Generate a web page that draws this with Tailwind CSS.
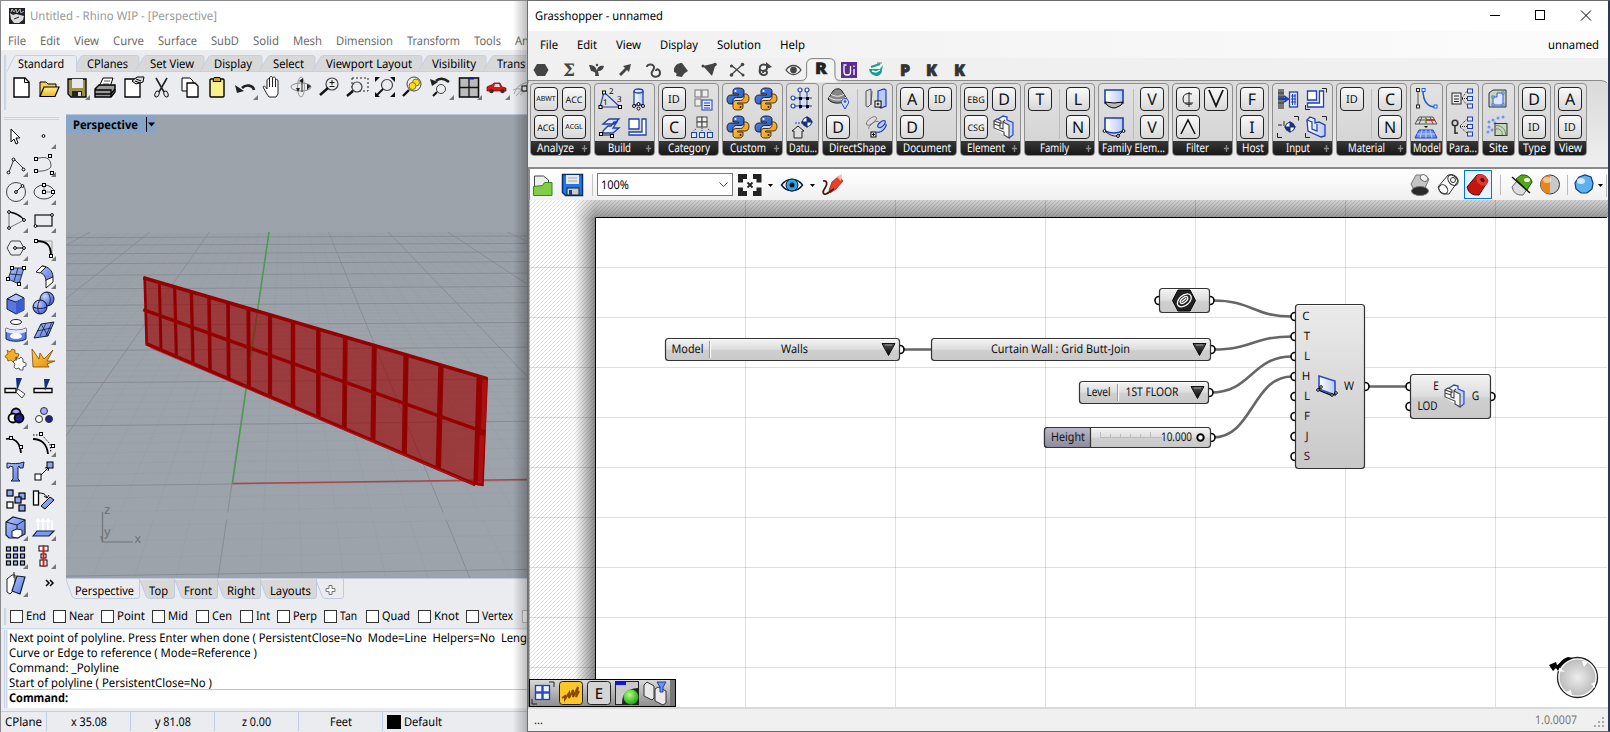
<!DOCTYPE html>
<html lang="en">
<head>
<meta charset="utf-8">
<title>Rhino WIP and Grasshopper</title>
<script src="https://cdn.jsdelivr.net/npm/@tailwindcss/browser@4"></script>
</head>
<body class="w-[1610px] h-[732px] overflow-hidden flex bg-[#ebecf0] font-['Noto_Sans','Open_Sans',sans-serif] text-[12px] leading-4 text-black select-none [text-rendering:geometricPrecision] [&_span]:whitespace-pre">

<svg class="absolute w-0 h-0">
  <defs>
    <linearGradient id="gBlue" x1="0" y1="0" x2="1" y2="1"><stop offset="0" stop-color="#b4c2ff"/><stop offset="1" stop-color="#5877e0"/></linearGradient>
    <linearGradient id="gPale" x1="0" y1="0" x2="1" y2="0"><stop offset="0" stop-color="#fff"/><stop offset="1" stop-color="#b9c9f8"/></linearGradient>
    <linearGradient id="gGold" x1="0" y1="0" x2="0" y2="1"><stop offset="0" stop-color="#fff0a0"/><stop offset="1" stop-color="#f0b51c"/></linearGradient>
    <linearGradient id="gOr" x1="0" y1="0" x2="1" y2="1"><stop offset="0" stop-color="#ffcf5e"/><stop offset="1" stop-color="#e88a00"/></linearGradient>
    <linearGradient id="gPy" x1="0" y1="0" x2="1" y2="1"><stop offset="0" stop-color="#4e8bf0"/><stop offset="1" stop-color="#2a52b0"/></linearGradient>
    <linearGradient id="gNode" x1="0" y1="0" x2="0" y2="1"><stop offset="0" stop-color="#f4f4f4"/><stop offset=".48" stop-color="#dedede"/><stop offset=".55" stop-color="#cfcfcf"/><stop offset="1" stop-color="#c9c9c9"/></linearGradient>
    <linearGradient id="gTall" x1="0" y1="0" x2="0" y2="1"><stop offset="0" stop-color="#ebebeb"/><stop offset="1" stop-color="#c8c8c8"/></linearGradient>
    <linearGradient id="gPur" x1="0" y1="0" x2="0" y2="1"><stop offset="0" stop-color="#b9b9c8"/><stop offset="1" stop-color="#8c8a9c"/></linearGradient>
    <linearGradient id="gTri" x1="0" y1="0" x2="0" y2="1"><stop offset="0" stop-color="#555"/><stop offset="1" stop-color="#000"/></linearGradient>
    <linearGradient id="gTop" x1="0" y1="0" x2="0" y2="1"><stop offset="0" stop-color="#d2d2d2"/><stop offset="1" stop-color="#9a9a9a"/></linearGradient>
    <linearGradient id="gLeft" x1="0" y1="0" x2="1" y2="0"><stop offset="0" stop-color="#999" stop-opacity="0"/><stop offset=".68" stop-color="#999" stop-opacity="0"/><stop offset="1" stop-color="#8c8c8c"/></linearGradient>
    <linearGradient id="gFade" x1="0" y1="0" x2="1" y2="0"><stop offset="0" stop-color="#fff"/><stop offset=".66" stop-color="#fff"/><stop offset="1" stop-color="#fff" stop-opacity="0"/></linearGradient>
    <radialGradient id="gSph" cx=".35" cy=".3" r=".8"><stop offset="0" stop-color="#c8d4ff"/><stop offset="1" stop-color="#3457d5"/></radialGradient>
    <radialGradient id="gBall" cx=".5" cy=".5" r=".5"><stop offset="0" stop-color="#ededed"/><stop offset="1" stop-color="#bdbdbd"/></radialGradient>
    <radialGradient id="gGreen" cx=".4" cy=".35" r=".7"><stop offset="0" stop-color="#b6ff7a"/><stop offset="1" stop-color="#0fa012"/></radialGradient>
    <pattern id="hatch" width="4" height="4" patternUnits="userSpaceOnUse"><path d="M-1 1L1-1M0 4L4 0M3 5L5 3" stroke="#000" stroke-opacity=".12" stroke-width="1"/></pattern>
    <symbol id="boxes" viewBox="0 0 24 24"><path d="M2 6l3-2 3 1 3-3 4 1 1 2 4 1 2 2v12l-4 3-7-4-9-5z" fill="#f8f8f8"/><path d="M14 4l7 3v13l-4 3V10l-4-3z" fill="#c4d1fa"/><path d="M6 4l5-3 4 1v3M15 5l6 2.500v12.500l-4 3" fill="none" stroke="#2b4cc0" stroke-width="1.300"/><path d="M2 6l6 2v5l3 1V7l6 3v13l-5-3v-3l-10-4zM2 6l3-2 4 2v3M11 7l2-2M2 9l6 2" fill="none" stroke="#444" stroke-width="1.100"/></symbol>
    <symbol id="wallic" viewBox="0 0 24 24"><path d="M4 3l16 5v14L4 16z" fill="url(#gPale)" stroke="#2b4cc0" stroke-width="1.600"/><path d="M3 17l14 5.500 4-2.500M3 17l3-3" stroke="#000" stroke-width="1.200" fill="none"/><g fill="#fff" stroke="#000"><circle cx="3" cy="17" r="1.300"/><circle cx="6" cy="14" r="1.300"/><circle cx="17" cy="22" r="1.300"/><circle cx="21" cy="20" r="1.300"/></g></symbol>
  </defs>
</svg>

<!-- Rhino window -->
<section class="relative w-[527px] h-[732px] shrink-0 overflow-hidden flex flex-col border-l border-t border-[#8a8a8e] bg-[#ebecf0]">
  <header class="h-[49px] bg-white shrink-0">
    <div class="h-[30px] flex items-center pl-2 gap-[5px] text-[#999]">
      <svg class="w-4 h-4" viewBox="0 0 16 16"><rect width="16" height="16" fill="#222"/><path d="M1 5l3 2 3-1 4 1 4 1-1 4-4 3H5L2 11z" fill="#ddd"/><path d="M2 4l1-3 2 3 2-3 1 4 3-4 1 4 3-2" stroke="#bbb" fill="none"/><path d="M5 11l5-2" stroke="#222"/></svg>
      <span data-w="187">Untitled - Rhino WIP - [Perspective]</span>
    </div>
    <nav id="rmenu" class="h-[19px] flex items-center pl-[7px] text-[#6b6b6b]"></nav>
  </header>
  <div class="h-[64px] shrink-0 flex pt-[5px]">
    <div class="w-[3px] h-[55px] ml-[3px] border-x border-[#c9d4e8]"></div>
    <div class="flex-1">
      <svg id="rtabs" class="block w-[520px] h-[18px]" viewBox="6 56 520 18"></svg>
      <div id="rtools" class="flex h-[28px] mt-[2px] ml-px"></div>
    </div>
  </div>
  <div class="flex h-[464px] shrink-0">
    <div class="w-[65px] shrink-0">
      <div class="ml-[3px] w-[55px] h-[3px] mt-[3px] border-y border-[#c9d4e8]"></div>
      <div id="ltools" class="grid grid-cols-[28px_28px] auto-rows-[28px] mt-[2px]"></div>
    </div>
    <svg id="view" class="block shrink-0 w-[462px] h-[464px]" viewBox="66 114 462 464"></svg>
  </div>
  <svg id="vtabs" class="block shrink-0 w-[527px] h-[22px]" viewBox="1 578 527 22"></svg>
  <div class="h-[29px] shrink-0 flex items-center border-b border-[#d3dbea] pt-[4px]">
    <div class="w-[3px] h-[17px] ml-[3px] border-x border-[#c9d4e8]"></div>
    <div id="osnap" class="flex ml-[4px]"></div>
  </div>
  <div class="h-[82px] shrink-0 flex pt-px">
    <div class="w-[3px] h-[78px] ml-[3px] border-x border-[#c9d4e8]"></div>
    <div class="h-[78px] flex-1 bg-white ml-px flex flex-col">
      <div class="h-[60px] shrink-0 border-b border-[#b9c7d8] pl-[1px] overflow-hidden flex flex-col items-start [&_svg]:h-[15px]!">
        <span data-w="518">Next point of polyline. Press Enter when done ( PersistentClose=No&nbsp; Mode=Line&nbsp; Helpers=No&nbsp; Leng</span>
        <span data-w="248">Curve or Edge to reference ( Mode=Reference )</span>
        <span data-w="110">Command: _Polyline</span>
        <span data-w="203">Start of polyline ( PersistentClose=No )</span>
      </div>
      <div class="pl-[1px] font-bold flex"><span data-w="59">Command:</span></div>
    </div>
  </div>
  <footer class="h-[20px] shrink-0 flex items-center border-t border-[#c0cde2] [&>div]:h-[19px] [&>div]:flex [&>div]:items-center [&>div]:border-r [&>div]:border-[#c0cde2]">
    <div class="w-[46px] justify-center"><span data-w="37">CPlane</span></div>
    <div class="w-[84px] justify-center"><span data-w="36">x 35.08</span></div>
    <div class="w-[84px] justify-center"><span data-w="36">y 81.08</span></div>
    <div class="w-[84px] justify-center"><span data-w="29">z 0.00</span></div>
    <div class="w-[84px] justify-center"><span data-w="22">Feet</span></div>
    <div class="pl-[4px] gap-[3px] border-none!"><i class="block w-[14px] h-[14px] bg-black"></i><span data-w="38">Default</span></div>
  </footer>
  <div class="absolute right-0 top-0 w-[14px] h-[732px] bg-linear-to-r from-black/0 to-black/25"></div>
</section>

<!-- Grasshopper window -->
<section class="w-[1083px] h-[732px] flex flex-col border border-[#6d6d70] border-r-2 border-r-[#28395c] bg-[#f0f0f0]">
  <header class="h-[30px] shrink-0 bg-white flex items-center pl-[7px]">
    <span data-w="128">Grasshopper - unnamed</span>
    <svg class="ml-auto w-[120px] h-[30px]" viewBox="1480 1 120 30" fill="none" stroke="#000" stroke-width="1"><path d="M1482 15.500h10M1573 10.500l10 10M1583 10.500l-10 10" transform="translate(8 0)"/><rect x="1535.500" y="10.500" width="9" height="9"/></svg>
    <i class="w-[8px] shrink-0"></i>
  </header>
  <nav id="gmenu" class="h-[27px] shrink-0 flex items-center pl-[12px] pr-[9px] bg-linear-to-r from-[#f0f0f0] to-[#fcfcfc]"></nav>
  <svg id="gtabs" class="block shrink-0 w-[1080px] h-[25px]" viewBox="528 58 1080 25"></svg>
  <div class="h-[84px] shrink-0 bg-linear-to-b from-[#dadada] to-[#efefef]">
    <div id="ribbon" class="flex gap-[3px] pl-[2px]"></div>
  </div>
  <div class="h-[33px] shrink-0 border-t-2 border-[#8a8a8a] border-l-2 bg-linear-to-b from-white to-[#f0f0f0] flex items-center">
    <svg class="w-[67px] h-[30px]" viewBox="530 169 67 30"><path d="M534.500 188v-13h9l5 4v7" fill="#eee" stroke="#444"/><path d="M533.500 194.500v-9l9-1 2-3h7.500v13z" fill="#83cc47" stroke="#2f8a1b"/><path d="M562.500 173.500h20v21h-17l-3-3z" fill="#1d78e8" stroke="#0b2c66" stroke-width="1.500"/><rect x="566" y="174" width="13" height="9" fill="#e8e8e8"/><path d="M568 177h9M568 180h9" stroke="#aaa"/><rect x="567" y="187" width="12" height="7" fill="#ccc" stroke="#123"/><rect x="569" y="189" width="3" height="5" fill="#14418f"/><path d="M592.500 173v22" stroke="#c4c4c4"/></svg>
    <div class="w-[136px] h-[23px] border border-[#7a7a7a] bg-white flex items-center pl-[3px] pr-[4px]"><span data-w="28">100%</span><svg class="ml-auto w-[9px] h-[6px]" viewBox="0 0 9 6" fill="none" stroke="#444"><path d="M.5.5l4 4 4-4"/></svg></div>
    <svg class="w-[115px] h-[30px]" viewBox="733 169 115 30"><g fill="none" stroke="#222" stroke-width="5"><path d="M747 175.500h-6.500v6M753 175.500h6v6M747 192.500h-6.500v-6M753 192.500h6v-6"/></g><path d="M747.500 181.500l5 5M752.500 181.500l-5 5" stroke="#222" stroke-width="1.800"/><path d="M768 183h5l-2.500 3zM810 183h5l-2.500 3z"/><path d="M781.500 184c5-7.500 16-7.500 21 0-5 7.500-16 7.500-21 0z" fill="#eef6fb" stroke="#123" stroke-width="1.500"/><circle cx="792" cy="184" r="6" fill="#36a3e0" stroke="#123"/><circle cx="792" cy="184" r="2.500" fill="#04182e"/><path d="M829 189l3-8 7-6 4 5-7 8-6 4z" fill="#e8412a" stroke="#8a1c10" stroke-width=".7"/><path d="M837 176l5-3-1 7z" fill="#f7b8a0"/><path d="M823 180c4-1 5 3 2 7s-2 7 1 6 5-4 8-5" fill="none" stroke="#4a1610" stroke-width="1.800"/></svg>
    <svg class="ml-auto w-[208px] h-[30px]" viewBox="1400 169 208 30" id="preview"></svg>
  </div>
  <div class="relative h-[507px] shrink-0">
    <svg id="canvas" class="block w-[1080px] h-[507px]" viewBox="528 200 1080 507"></svg>
    <div class="absolute left-px bottom-0 w-[147px] h-[28px] border border-black bg-linear-to-b from-[#d8d8d8] to-[#8f8f8f]"><svg id="mini" class="block w-[145px] h-[26px]" viewBox="530 680 145 26"></svg></div>
  </div>
  <footer class="flex-1 border-t-2 border-[#d9d9d9] flex items-center pl-[6px] pr-[3px] bg-[#f0f0f0]"><span class="text-[#223]" data-w="9">...</span><span class="ml-auto text-[#7b756e]" data-w="42">1.0.0007</span><svg class="ml-[16px] w-[12px] h-[12px] mt-[6px]" viewBox="0 0 12 12" fill="#a8a8a8"><path d="M9 0h2v2H9zM5 4h2v2H5zM9 4h2v2H9zM1 8h2v2H1zM5 8h2v2H5zM9 8h2v2H9z"/></svg></footer>
</section>

<script>
const $ = id => document.getElementById(id);
const px = n => `style="width:${n}px"`;
const words = (list, end) => list.map(([t, x, w], i) => `<div class="shrink-0" ${px((list[i + 1] ? list[i + 1][1] : end) - x)}><span data-w="${w}">${t}</span></div>`).join('');
const label = (t, x, y, w, more = '') => `<text x="${x}" y="${y}" font-size="12" textLength="${w}" lengthAdjust="spacingAndGlyphs" ${more}>${t}</text>`;

$('rmenu').innerHTML = words([['File',8,18],['Edit',40,20],['View',74,25],['Curve',113,31],['Surface',158,39],['SubD',211,28],['Solid',253,26],['Mesh',293,29],['Dimension',336,57],['Transform',407,53],['Tools',474,27],['An',515,14]], 560);
$('gmenu').innerHTML = words([['File',540,18],['Edit',577,20],['View',616,25],['Display',660,38],['Solution',717,44],['Help',780,25]], 820) + '<span class="ml-auto" data-w="51">unnamed</span>';

// Tool-group tabs above the Rhino toolbar
$('rtabs').innerHTML = [['CPlanes',76,139,87,41],['Set View',139,204,150,44],['Display',204,262,214,38],['Select',263,315,273,31],['Viewport Layout',316,422,326,86],['Visibility',422,486,432,44],['Transform',487,560,497,54]]
  .map(([t,a,b,x,w]) => `<path d="M${a-4} 72.500L${a+5} 57.500Q${a+6} 56.500 ${a+8} 56.500H${b-2}Q${b} 56.500 ${b} 59V72.500z" fill="#d8d8d9" stroke="#c5cfe3"/>${label(t,x,69,w)}`).join('')
  + `<path d="M7 72.500L14 58Q15 56.500 17 56.500H74Q76.500 56.500 76.500 59V72.500H530" fill="none" stroke="#c5cfe3"/><path d="M8 73L15 58Q16 57 17 57H74Q76 57 76 59V73z" fill="#ebecf0"/>${label('Standard',18,69,46)}`;

// Viewport tabs
$('vtabs').innerHTML = '<path d="M66 578.500H530" stroke="#c0cbe0"/>' + [['Layouts',260,316,270,41],['Right',217,260,227,28],['Front',175,217,184,28],['Top',140,174,149,19],['Perspective',66,139,75,59]]
  .map(([t,a,b,x,w]) => `<path d="M${a} ${t=='Perspective'?579:580}L${a+6} 596Q${a+7} 598.500 ${a+10} 598.500H${b-2}Q${b+.5} 598.500 ${b+.5} 596V579" fill="${t=='Perspective'?'#ebecf0':'#d8d8d9'}" stroke="#c0cbe0"/>${label(t,x,594.5,w)}`).join('')
  + '<path d="M316 580L322 596Q323 598.500 326 598.500H341Q343.500 598.500 343.500 596V579" fill="none" stroke="#c0cbe0"/><path d="M329 585.500h3v3h3v3h-3v3h-3v-3h-3v-3h3z" fill="#fff" stroke="#777"/>';

$('osnap').innerHTML = [['End',10,20],['Near',53,25],['Point',101,28],['Mid',152,20],['Cen',196,20],['Int',240,14],['Perp',277,24],['Tan',324,17],['Quad',366,28],['Knot',418,25],['Vertex',466,31],['',522,0]]
  .map(([t,x,w],i,l) => `<div class="shrink-0 flex items-center gap-[3px] overflow-hidden" ${px((l[i+1]?l[i+1][1]:540)-x)}><i class="block w-[13px] h-[13px] shrink-0 border bg-white ${t?'border-[#333]':'border-[#bbb]'}"></i>${t?`<span data-w="${w}">${t}</span>`:''}</div>`).join('');

// Rhino standard toolbar icons, 28px cells
const corner = '<path d="M27 22v5h-5z" fill="#777"/>';
const std = [
 '<path d="M7 5h11l4 4v15H7z" fill="#fff" stroke="#000" stroke-width="1.400"/><path d="M17.500 5v4.500H22" fill="none" stroke="#000"/>',
 '<path d="M5 23V9h6l2 2h8v4" fill="#f3cf4e" stroke="#000"/><path d="M5 23.500L9 14h15l-4 9.500z" fill="url(#gGold)" stroke="#000" stroke-width="1.200"/>',
 '<path d="M5 6h18v18H8l-3-3z" fill="#9a9145" stroke="#000" stroke-width="1.300"/><rect x="9" y="6" width="11" height="9" fill="#e8e8ee"/><rect x="9" y="18" width="10" height="6" fill="#222"/><rect x="15" y="19" width="3" height="4" fill="#ddd"/>'+corner,
 '<path d="M8 14l4-9h10l-3 9z" fill="#fff" stroke="#000"/><path d="M13 8h6M12 11h6" stroke="#555"/><path d="M4 16l4-4h16v7l-4 5H4z" fill="#999" stroke="#000" stroke-width="1.400"/><path d="M4 17h16v7M4 21h16l4-5" fill="none" stroke="#000" stroke-width="1.400"/>',
 '<path d="M6 6h12l3 4v14H6z" fill="#fff" stroke="#000" stroke-width="1.300"/><path d="M13 8l5-4h7l-1 5-7 2z" fill="#ddd" stroke="#000"/><path d="M17 6l5 2M16 8l5 2" stroke="#000"/>',
 '<path d="M9 5l8 14M20 5l-8 14" stroke="#222" stroke-width="1.600"/><ellipse cx="10" cy="21" rx="2" ry="3" fill="none" stroke="#222" transform="rotate(25 10 21)"/><ellipse cx="19" cy="21" rx="2" ry="3" fill="none" stroke="#222" transform="rotate(-25 19 21)"/>',
 '<path d="M7 5h8l3 3v10H7z" fill="#fff" stroke="#000"/><path d="M12 10h8l3 3v11H12z" fill="#fff" stroke="#000" stroke-width="1.300"/>',
 '<rect x="7" y="6" width="14" height="18" rx="1" fill="#fbf08e" stroke="#000" stroke-width="1.400"/><path d="M11 4.500h6l1 4h-8z" fill="#c79b34" stroke="#000"/>',
 '<path d="M23 17c-1-5-8-6-12-2" fill="none" stroke="#222" stroke-width="2.600"/><path d="M4 12l2 8 7-2z" fill="#222"/>'+corner,
 '<path d="M8 21L4 14c1-2 3 0 4 2V7c1-2 2.500-1 2.500 0V4.500c1-1.500 3-1 3 0V5c1-1.500 3-1 3 .500V7c1-1 2.500-.500 2.500 1v13l-2 3h-7z" fill="#fff" stroke="#222"/><path d="M10.500 7v7M13.500 5v9M16.500 7v7" stroke="#222"/>',
 '<ellipse cx="14" cy="14" rx="10" ry="4" fill="none" stroke="#888"/><ellipse cx="14" cy="14" rx="3.500" ry="10" fill="none" stroke="#999"/><path d="M12 8l4-3v5zM20 11l4 2-4 4zM9 15l2 4 2-4z" fill="#222"/><path d="M15 9v10" stroke="#222"/>',
 '<circle cx="17" cy="11" r="6" fill="#eee" stroke="#444" stroke-width="1.200"/><path d="M13 15l-8 7" stroke="#111" stroke-width="2.400"/><path d="M17 7v5M14.500 9.500h5M14.500 13.500h5" stroke="#111"/>',
 '<rect x="9" y="5" width="16" height="13" fill="none" stroke="#222" stroke-dasharray="2 2"/><circle cx="14" cy="14" r="5" fill="#ebecf0" stroke="#444" stroke-width="1.200"/><path d="M10 18l-6 5" stroke="#111" stroke-width="2.400"/>',
 '<path d="M4 9V4h5zM19 4h5v5zM4 19v5h5zM24 19v5h-5z" fill="#111"/><circle cx="16" cy="12" r="5.500" fill="none" stroke="#444" stroke-width="1.200"/><path d="M12 16l-7 7" stroke="#111" stroke-width="1.800"/>',
 '<circle cx="15" cy="11" r="7" fill="#eee" stroke="#444"/><path d="M10 17l-6 6" stroke="#111" stroke-width="2.400"/><circle cx="17" cy="9.500" r="3.500" fill="#ffe100" stroke="#864"/><circle cx="13.500" cy="13" r="3.500" fill="#ffe100" stroke="#864"/>',
 '<path d="M22 9c-5-4-10-4-13-1" fill="none" stroke="#222" stroke-width="2.600"/><path d="M3 6l2 7 6-4z" fill="#222"/><circle cx="14" cy="16" r="4.500" fill="#eee" stroke="#444"/><path d="M10 19l-4 4" stroke="#111" stroke-width="2"/>'+corner,
 '<rect x="4.500" y="5" width="19" height="19" fill="#bbb" stroke="#111" stroke-width="1.600"/><path d="M14 5v19M4.500 14.500h19" stroke="#111" stroke-width="1.300"/><path d="M14 5.500h5" stroke="#11c" stroke-width="2"/>'+corner,
 '<path d="M4 14c3-2 6-2 7-4h6l2 4 4 1v3H4z" fill="#e11616" stroke="#600" stroke-width=".700"/><path d="M12 11h4l1 3h-6z" fill="#ddd"/><circle cx="8.500" cy="18" r="2.300" fill="#333"/><circle cx="19.500" cy="18" r="2.300" fill="#333"/>'+corner,
 '<path d="M3 21c3-10 12-13 20-11M5 23l12-13M9 22l12-10M2 17c6-3 10 0 16 2" fill="none" stroke="#aaa"/><rect x="11" y="13" width="5" height="5" fill="#fff" stroke="#000"/>'
];
$('rtools').innerHTML = std.map(s => `<svg class="shrink-0 w-[28px] h-[28px]" viewBox="0 2 28 28">${s}</svg>`).join('');

// Rhino side toolbar icons
const dot = (x,y) => `<circle cx="${x}" cy="${y}" r="1.400" fill="#fff" stroke="#000"/>`, sq = (x,y) => `<rect x="${x-1.500}" y="${y-1.500}" width="3" height="3" fill="#fff" stroke="#000"/>`;
const bl = (x,y,f='#8ea4f2') => `<rect x="${x}" y="${y}" width="6" height="6" fill="${f}" stroke="#000" stroke-width="1.200"/>`;
const left = [
 '<path d="M10 7v13l3-3 2 5 2-1-2-5h4z" fill="#fff" stroke="#000"/>', dot(14.500,14)+corner,
 '<path d="M8 22L13 9l10 10" fill="none" stroke="#333"/>'+dot(7.500,22.500)+dot(12.500,9.500)+dot(22.500,19.500)+corner,
 '<path d="M7 9c8-3 15-2 15 7 0 3-7 6-15 5" fill="none" stroke="#555"/>'+sq(7,9)+sq(21,6)+sq(7,21)+sq(23,23)+corner,
 '<circle cx="15" cy="14" r="9.500" fill="none" stroke="#444"/><path d="M15 14l6-6" stroke="#000"/>'+dot(15,14)+dot(21.500,8)+corner,
 '<ellipse cx="15" cy="14" rx="10" ry="7" fill="none" stroke="#444"/><path d="M15 7v7h9" fill="none" stroke="#777"/>'+sq(15,7)+sq(15,14)+sq(24,14)+corner,
 '<path d="M8 6v16M8 22l15-8" stroke="#777"/><path d="M8 6c7 1 12 4 15 8" fill="none" stroke="#000" stroke-width="1.400"/>'+dot(8,6)+dot(23,14)+dot(8,22)+corner,
 '<rect x="6" y="9" width="17" height="11" fill="none" stroke="#222" stroke-width="1.300"/>'+dot(6.500,20)+dot(23,9)+corner,
 '<path d="M10 7h9l4 7-4 7h-9l-4-7z" fill="none" stroke="#444"/><path d="M14 14h9" stroke="#000"/>'+dot(14,14)+dot(23,14)+corner,
 '<path d="M7 7h16v14" fill="none" stroke="#999"/><path d="M7 7c11 0 15 4 15 15" fill="none" stroke="#000" stroke-width="1.800"/>'+sq(7,7)+sq(22,22)+corner,
 '<path d="M11 6h12l-5 16-11-5z" fill="url(#gBlue)" stroke="#234"/><path d="M9 12l12 1M17 6l-4 13" stroke="#234"/>'+sq(11,6)+sq(23,6)+sq(7,17)+sq(18,22)+corner,
 '<path d="M13 4c6 0 11 5 11 11l-7 4c0-5-4-9-9-9z" fill="url(#gBlue)" stroke="#222"/><path d="M7 10l6-6 4 1-6 6zM17 18l7-3v5l-7 6z" fill="#fff" stroke="#222"/>'+corner,
 '<path d="M6 9l9-5 8 4v12l-8 4-9-5z" fill="#5877e0" stroke="#123"/><path d="M6 9l9-5 8 4-8 4z" fill="#b4c2ff" stroke="#123"/><path d="M15 12l8-4v12l-8 4z" fill="#3d5bd0"/>'+corner,
 '<circle cx="18" cy="9" r="7" fill="url(#gSph)" stroke="#112"/><circle cx="11" cy="17" r="7" fill="url(#gSph)" stroke="#112"/><path d="M11 10c-3 4-3 10 0 14M4 17c4 2 10 2 14 0M18 2c4 4 4 9 2 13" fill="none" stroke="#224"/>'+corner,
 '<ellipse cx="15" cy="4" rx="5.500" ry="2.500" fill="#fff" stroke="#222"/><path d="M5 10c5 3 15 3 20 0v11c-5 3-15 3-20 0z" fill="#5f80ee" stroke="#124"/><path d="M5 10c5 3 15 3 20 0v4c-8 3-14 2-20 0z" fill="#dfe6ff"/><ellipse cx="15" cy="18" rx="6" ry="3" fill="#fff"/>'+corner,
 '<path d="M5 20l7-14 13-2-6 14z" fill="url(#gBlue)" stroke="#123"/><path d="M8 13l14-3M11 18L17 5M17 18l6-14M12 6l7 12" stroke="#123" stroke-width=".8"/>'+corner,
 '<path d="M6 4l3 2 2-3 3 1v3l4 1-1 3-3 1 1 3-3 1-2-2-3 1-1-3-2-1 1-2 2-1z" fill="#f5ac28" stroke="#7a5a10" stroke-width=".8"/><path d="M15 11l3 2 2-2 2 2v3l3 1v3l-3 1 0 3-3 0-1-2-3 1-2-2 1-3-2-2 2-2 2 0z" fill="#fff" stroke="#333" stroke-width=".8"/>',
 '<path d="M3 3l7 10 1-6 4 6 9-9-6 11h8l-8 3 2 3H4z" fill="url(#gOr)" stroke="#7a4a00" stroke-width=".8"/>',
 '<path d="M4 14.500h11v4H4z" fill="#fff" stroke="#000" stroke-width="1.300"/><path d="M15 4h6l-5 13z" fill="#16307e"/><path d="M17 15l7 5-3 4-6-6z" fill="#fff" stroke="#444"/>',
 '<path d="M5 14.500h18v4H5z" fill="#fff" stroke="#000" stroke-width="1.300"/><path d="M15 5h6l-5 12z" fill="#16307e"/>',
 '<g stroke="#000" stroke-width="1.800"><circle cx="15" cy="11" r="4.500" fill="#a9a6ff"/><circle cx="12" cy="16" r="4.500" fill="#fff"/><circle cx="18" cy="16" r="4.500" fill="#221d88"/></g>'+corner,
 '<g stroke="#333"><circle cx="15" cy="9" r="3.500" fill="#a9a6ff"/><circle cx="10" cy="17" r="3.500" fill="#fff"/><circle cx="20" cy="17" r="3.500" fill="#221d88"/></g>',
 '<path d="M5 9c8-2 14 3 15 14" fill="none" stroke="#000" stroke-width="1.800"/>'+sq(10,8)+sq(20,17),
 '<path d="M4 5h9l8 9 1 9" fill="none" stroke="#000" stroke-dasharray="1.500 1.500"/><path d="M4 9c8 0 14 5 15 15" fill="none" stroke="#000" stroke-width="1.800"/>'+sq(12,4)+sq(24,16)+corner,
 '<path d="M6 5c6 1 12 1 17-1l-1 6h-3l-1-2-1 1v12l2 2h-9l2-2V9l-3-1-1 2H6z" fill="url(#gBlue)" stroke="#124"/>',
 '<path d="M12 17l8-8M20 9l-4 1M20 9l-1 4" stroke="#000"/><rect x="18" y="4" width="6" height="6" fill="#8ea4f2" stroke="#000"/><rect x="6" y="16" width="6" height="6" fill="#fff" stroke="#000"/>'+corner,
 bl(6,4)+bl(18,7)+bl(14,11)+bl(6,16,'#fff')+bl(18,19),
 '<rect x="4.500" y="5" width="5" height="14" fill="#fff" stroke="#000" stroke-width="1.300"/><path d="M10 7c4 0 7 1 8 5M18 12l-3-2M18 12l2-3" fill="none" stroke="#000"/><path d="M12 20l9-9 4 3-9 9z" fill="url(#gBlue)" stroke="#000"/>',
 '<path d="M5 8l7-5 12 3v14l-7 4H8l-3-3z" fill="url(#gBlue)" stroke="#123" stroke-width="1.200"/><path d="M5 8l11 3 8-5M16 11v5" fill="none" stroke="#123"/><path d="M11 17l5-2 5 1v5l-4 3-6-1z" fill="#fff" stroke="#222"/>'+corner,
 '<path d="M9 17V6M14 17V6M19 17V6M23 17V6M7 8l2-3 2 3M12 8l2-3 2 3M17 8l2-3 2 3" fill="none" stroke="#fff" stroke-width="1.500"/><path d="M4 22l4-5h17l-5 5z" fill="#7d97f5" stroke="#124" stroke-width="1.200"/>'+corner,
 [5,12,19].map(y=>[5,12,19].map(x=>`<rect x="${x+.5}" y="${y}" width="4" height="4" fill="#9fb2f8" stroke="#000" stroke-width="1.200"/>`).join('')).join('')+corner,
 '<g fill="#fff" stroke="#000"><rect x="10" y="4" width="9" height="5"/><rect x="12" y="12" width="5" height="4"/><rect x="11" y="18" width="7" height="6"/></g><path d="M14.500 3v22" stroke="#e01818" stroke-width="2"/>'+corner,
 '<path d="M6 9l5-4h3v14l-5 5-3-2z" fill="#fff" stroke="#222"/><path d="M13 2v6" stroke="#222"/><path d="M16 6l8 1-5 17-8-3z" fill="url(#gBlue)" stroke="#123" stroke-width="1.200"/>'+corner,
 '<path d="M17 10l3 3-3 3M21 10l3 3-3 3" fill="none" stroke="#000" stroke-width="1.500"/>'
];
$('ltools').innerHTML = left.map(s => `<svg class="w-[28px] h-[28px]" viewBox="0 0 28 28">${s}</svg>`).join('');

// Perspective viewport: ground grid from its vanishing point, then axes and curtain wall
const vx = 284.800, vy = 124.700, top0 = 232, bot = 578;
let g = '<rect x="66" y="114" width="462" height="464" fill="#9ca3ab"/><g fill="none">';
for (let n = -90; n <= 90; n++) {
  const x0 = 269 + 59.600 * n / 6, k = (bot - vy) / (top0 - vy), major = n % 6 === 0;
  g += `<path d="M${x0} ${top0}L${vx + (x0 - vx) * k} ${bot}" stroke="${major ? '#868891' : '#929aa2'}" stroke-width="${major ? 1 : .7}" stroke-opacity="${major ? .9 : .6}"/>`;
}
for (let n = -8; n <= 71; n++) {
  const d = 1 / (.002783 + .000556 * n / 6), y = vy + d, major = n % 6 === 0, s = -.0118 * d / 359;
  if (y < 233) continue;
  g += `<path d="M66 ${y - s * 166}L528 ${y + s * 296}" stroke="${major ? '#868891' : '#929aa2'}" stroke-width="${major ? 1 : .7}" stroke-opacity="${major ? .9 : .55}"/>`;
}
g += '</g><rect x="66" y="512.500" width="462" height="7" fill="#9ca3ab"/><path d="M232.500 483.500L528 479.500" stroke="#a8484a" stroke-width="1.500"/><path d="M269 232L232.500 483" stroke="#4b9b4b" stroke-width="1.500"/>';
g += '<g transform="translate(130 220) scale(.33333)"><path d="M42 172L1072 474L1060 798L1032 794L50 372z" fill="#990000" fill-opacity=".64"/><g stroke="#960000" fill="none"><path d="M40 173L1072 476" stroke-width="11"/><path d="M40 269L1065 637" stroke-width="10"/><path d="M48 371L1036 794" stroke-width="11"/><path d="M44 170L50 372" stroke-width="8"/>';
[[88,186,93,388],[134,198,139,407],[184,213,189,430],[237,228,240,452],[294,245,296,476],[355,263,357,500],[420,283,420,528],[489,303,489,558],[565,325,565,590],[646,349,643,624],[733,375,729,660],[828,403,823,700],[933,434,925,744]].forEach(([a,b,c,d],i) => g += `<path d="M${a} ${b}L${c} ${d}" stroke-width="${9 + i * .6}"/><path d="M${a+1} ${b}L${c+1} ${d}" stroke="#6d0000" stroke-width="1.500"/>`);
g += '</g><path d="M1040 470L1074 474L1061 799L1030 794z" fill="#960000"/><path d="M1057 478l14 2-4 150-14-2zM1049 645l14 1-6 145-14-2z" fill="#a81212"/><path d="M60 383L1030 793" stroke="#b52a2a" stroke-width="2"/></g>';
g += '<path d="M256.500 317L250 360" stroke="#6b4a20" stroke-opacity=".55" stroke-width="1.300"/>';
g += '<path d="M102.500 512V542H133M101 536l1.500 6" fill="none" stroke="#70757b" stroke-width="1.200"/><g font-size="13" fill="#6c7177" font-family="Liberation Sans"><text x="104" y="514">z</text><text x="104" y="536">y</text><text x="134.500" y="543">x</text></g>';
g += '<path d="M65 114.500H528" stroke="#b9c5da"/><rect x="66" y="115" width="90" height="18" fill="#87a5c9"/><path d="M146.500 117v15" stroke="#000"/><path d="M148 122.500h7l-3.500 4z"/>' + label('Perspective', 73, 128.500, 65, 'font-weight="700"');
$('view').innerHTML = g;

// Grasshopper category tabs
const dk = 'fill="#444"', ds = 'stroke="#444" fill="none"';
$('gtabs').innerHTML = `<path d="M528 83V80.500H801Q806.500 80.500 806.500 75V64Q807 58.500 813 58.500H829Q835 58.500 835 64V75Q835 80.500 840.500 80.500H1601Q1606 81 1607 83" fill="#dadada" stroke="#8a8a8a"/><path d="M803 82.500Q807.500 80 807.500 75V64Q808 59.500 813 59.500H829Q834 59.500 834 64V75Q834 80 838 82.500z" fill="#f3f3f3"/>
<path d="M537 64h8l3.500 6-3.500 6h-8l-3.500-6z" ${dk}/><text x="563" y="76" font-size="17" font-weight="800" font-family="DejaVu Serif" ${dk} textLength="12" lengthAdjust="spacingAndGlyphs">Σ</text>
<path d="M595 76c1-4 0-4-4-5l-2-6c5 0 7 2 8 6 0-3 2-6 7-5-1 4-3 5-6 5l1 5z" ${dk}/><circle cx="597" cy="65" r="1.200" ${dk}/><path d="M619 74l6-6-2-2 8-2-2 8-2-2-6 6z" ${dk}/>
<path d="M647 67c0-4 8-3 7 1s-4 4-2 7 8 2 8-2-4-5-4-2" stroke-width="2" ${ds}/><path d="M674 69c1-4 4-6 8-6l6 8c-2 1-5 3-6 6l-6-1c1-2 1-3-2-4z" ${dk}/><path d="M703 66l13-3-4 13z" ${dk}/><circle cx="703" cy="66" r="1.500" ${dk}/><circle cx="715" cy="64.500" r="1.800" ${dk}/>
<path d="M731 65l12 10M742 65l-11 10" stroke-width="1.300" ${ds}/><g ${dk}><circle cx="731.500" cy="66" r="1.600"/><circle cx="742.500" cy="64.500" r="1.800"/><circle cx="731.500" cy="75" r="1.800"/><circle cx="743" cy="75" r="1.500"/></g>
<path d="M768 66c-5-3-9-1-8 3 1 3 7 2 7-1M760 69c-2 6 6 8 7 4 0-3-4-3-4 0" stroke-width="1.900" ${ds}/><path d="M766 62l6 5-6 2z" ${dk}/>
<path d="M786 70c4-6 11-6 15 0-4 6-11 6-15 0z" fill="#eee" stroke="#444" stroke-width="1.300"/><circle cx="793.500" cy="70" r="3.300" ${dk}/>
<text x="815" y="74" font-size="16" font-weight="900" fill="#222" stroke="#222" stroke-width=".5" textLength="12" lengthAdjust="spacingAndGlyphs">R</text>
<rect x="841" y="62" width="16" height="16" fill="#5c2d91"/><path d="M844 66v6q0 3 3 3h1q2.500 0 2.500-3v-6M854 69v6M854 65.500v1.500M843.500 65h3" stroke="#fff" stroke-width="1.300" fill="none"/>
<path d="M869 69h11l3-4-1 5c0 4-3 6-6 6-4-1-6-3-7-7z" fill="#1b9c8c"/><path d="M871 67l9-3" stroke="#1b9c8c" stroke-width="2"/><path d="M872 71l4 1 4-2" stroke="#fff" fill="none" stroke-width="1.300"/><path d="M877 63l5 0" stroke="#777"/>
<g font-size="16" font-weight="900" fill="#333" stroke="#333" stroke-width=".7"><text x="900" y="76">P</text><text x="926" y="76">K</text><text x="954" y="76">K</text></g>`;

// Ribbon: plain items are lettered keys, starred ones are drawn icons
const key = (t) => `<div class="w-[24px] h-[24px] rounded-[4px] border border-[#222] bg-linear-to-b from-[#fafafa] to-[#d8d8d8] flex items-center justify-center leading-none ${t.length == 1 ? 'text-[16px]' : t.length == 2 ? 'text-[11px]' : t.length == 3 ? 'text-[9px]' : 'text-[7px]'} text-[#111]">${t}</div>`;
const ic = s => `<svg class="w-[24px] h-[24px]" viewBox="0 0 24 24">${s}</svg>`;
const py = ic('<path d="M12 1C8 1 7 2.500 7 4v3h5.500v1H5C2.500 8 1 9.500 1 12.500S2.500 17 4.500 17H7v-3c0-2 1.500-3.500 3.500-3.500H15c1.500 0 3-1 3-3V4c0-2-2-3-6-3z" fill="url(#gPy)" stroke="#112" stroke-width=".9"/><path d="M12 23c4 0 5-1.500 5-3v-3h-5.500v-1H19c2.500 0 4-1.500 4-4.500S21.500 7 19.500 7H18v3c0 2-1.500 3.500-3.500 3.500H10c-1.500 0-3 1-3 3V20c0 2 1 3 5 3z" fill="url(#gOr)" stroke="#321" stroke-width=".9"/><circle cx="9.500" cy="4" r="1" fill="#fff"/><circle cx="14.500" cy="20" r="1" fill="#321"/>');
const B = 'stroke="#1d3fb0" fill="none" stroke-width="1.200"', K = 'stroke="#222" fill="none"', F = 'stroke="#1d3fb0" fill="url(#gPale)" stroke-width="1.300"', C = '<path d="M18 1.500h4.500v4M1.500 18v4.500H6" fill="none" stroke="#222"/>';
const I = {
 py,
 tri: ic(`<path d="M2 20L6 5 22 20z" ${B}/>${sq(2.500,20)}${sq(6,5.500)}${sq(22,20)}<g font-size="8" fill="#000"><text x="11" y="7">2</text><text x="5" y="18">1</text><text x="19" y="15">3</text></g>`),
 col: ic(`<path d="M8 4v14h9V4" ${F}/><ellipse cx="12.500" cy="4" rx="4.500" ry="2" ${F}/><g fill="#fff" stroke="#000"><circle cx="8" cy="19" r="1.500"/><circle cx="17" cy="19" r="1.500"/><circle cx="12.500" cy="17" r="1.500"/><circle cx="12.500" cy="21.500" r="1.500"/></g>`),
 beam: ic(`<path d="M5 9l6-5h10l-5 5zM5 16l5-5h3l3-4h3l-4 6h6l-6 5H5z" ${F}/><path d="M3 20h12" ${K}/>${sq(3,19)}${sq(14,21)}`),
 floor: ic(`<path d="M3 4h10v10H3zM16 4h4v16H3v-3h13z" fill="#fff" stroke="#1d3fb0" stroke-width="1.300"/>`),
 cat1: ic('<g fill="#eee" stroke="#777"><rect x="5" y="3" width="6" height="7"/><rect x="12" y="3" width="6" height="7"/><rect x="5" y="12" width="6" height="7"/></g><rect x="12" y="13" width="10" height="10" fill="#e4ebff" stroke="#1d3fb0"/><path d="M14 16h6M14 18.500h6M14 21h6" stroke="#1d3fb0"/>'),
 cat2: ic('<g fill="#eee" stroke="#444"><rect x="7" y="2" width="5" height="5"/><rect x="12" y="2" width="5" height="5"/><rect x="7" y="7" width="5" height="5"/><rect x="12" y="7" width="5" height="5"/></g><path d="M6 14l-3 2M12 13v3M18 14l3 2" stroke="#333" stroke-dasharray="1 1"/><g fill="#dfe7ff" stroke="#1d3fb0"><rect x="1.500" y="17.500" width="5" height="5"/><rect x="9.500" y="17.500" width="5" height="5"/><rect x="17.500" y="17.500" width="5" height="5"/></g>'),
 grid: ic('<path d="M5 11h17M5 19h17M10 5v17M17 5v17" stroke="#1d3fb0"/><g fill="#fff" stroke="#1d3fb0" stroke-width="1.200"><circle cx="3" cy="11" r="2"/><circle cx="3" cy="19" r="2"/><circle cx="10" cy="3" r="2"/><circle cx="17" cy="3" r="2"/></g><g fill="#000"><path d="M9 10h3v3H9zM16 10h3v3h-3zM9 18h3v3H9zM16 18h3v3h-3z"/></g>'),
 home: ic('<path d="M2 16l6-5 6 5h-2v7H4v-7z" fill="#ddd" stroke="#222"/><path d="M5 8h8" stroke="#1d3fb0" stroke-dasharray="2 1"/><circle cx="17" cy="7" r="4.500" fill="#fff" stroke="#16307e" stroke-width="1.200"/><path d="M17 7V2.500A4.500 4.500 0 0 1 21.500 7zM17 7v4.500A4.500 4.500 0 0 1 12.500 7z" fill="#16307e"/><path d="M17 1v12M11 7h12" stroke="#16307e"/>'),
 dome: ic('<path d="M7 4c3-3 7-3 9 0l5 8c-3 5-15 6-19 0z" fill="#888" stroke="#222"/><path d="M5 7c3 3 10 3 13 0M3 10c4 4 14 4 17 0" fill="none" stroke="#eee"/><path d="M19 22l-3.500-6a3.600 3.600 0 1 1 7 0z" fill="#cddcff" stroke="#2b4cc0"/><circle cx="19" cy="14.500" r="1.200" fill="#2b4cc0"/>'),
 dsA: ic('<path d="M2 4l5-2v15l-3 3-2-1z" fill="#ddd" stroke="#555"/><path d="M8 4l-1 14" stroke="#555"/><path d="M14 4l6-2 2 1v16l-5 2-3-2z" fill="#b9c9f8" stroke="#1d3fb0" stroke-width="1.200"/><rect x="11" y="14" width="6" height="6" fill="#fff" stroke="#000"/><path d="M14 15.500v3M12.500 17h3" stroke="#000"/>'),
 dsB: ic('<path d="M3 10c-3-3 6-10 9-8s-7 10-9 8zM5 14c-2-2 7-10 10-7" fill="#ddd" stroke="#777"/><path d="M14 12c-2-2 5-8 7-6s-5 9-7 6zM13 17c4 2 10-5 9-8" fill="#b9c9f8" stroke="#1d3fb0" stroke-width="1.200"/><rect x="7" y="17" width="5" height="5" fill="#fff" stroke="#000"/><path d="M9.500 18v3M8 19.500h3" stroke="#000"/>'),
 boxes: '<svg class="w-[24px] h-[24px]"><use href="#boxes"/></svg>',
 faA: ic('<path d="M3 3h18v13q-9 6-18 0z" fill="url(#gPale)" stroke="#1d3fb0" stroke-width="1.600"/><path d="M3 15q3 6 10 6 7-2 8-6-9 2-18 0" fill="#bbb" stroke="#000"/>'),
 faB: ic(`<path d="M3 3h18v13q-9 4-18 0z" fill="url(#gPale)" stroke="#1d3fb0" stroke-width="1.600"/><path d="M3 16q6 6 13 5l5-5" ${K}/>${dot(2.500,16)}${dot(21.500,16)}${dot(16,21)}`),
 nin: key('<svg class="w-[22px] h-[22px]" viewBox="0 0 22 22" fill="none" stroke="#222"><path d="M15 6q-9-2-9 5t9 5M12 4v15M8 15h8"/></svg>'),
 or: key('<svg class="w-[22px] h-[22px]" viewBox="0 0 22 22" fill="none" stroke="#111" stroke-width="1.800"><path d="M4 2l7 16L18 2"/></svg>'),
 and: key('<svg class="w-[22px] h-[22px]" viewBox="0 0 22 22" fill="none" stroke="#111" stroke-width="1.500"><path d="M4 18l7-14 7 14"/></svg>'),
 in1: ic('<path d="M2 2h6v20H2z" fill="#777"/><path d="M2 6h6M2 10h6M2 16h6" stroke="#333"/><path d="M2 12h8M8 9l4 3-4 3" stroke="#1d3fb0" stroke-width="2" fill="none"/><rect x="13.500" y="5" width="8" height="15" fill="#e4ebff" stroke="#1d3fb0" stroke-width="1.300"/><path d="M15 9h5M15 12h5M15 15h5M16.500 7v11M19 7v11" stroke="#1d3fb0"/>'),
 in2: ic(`<path d="M3.500 4h9v9h-9zM15.500 4h4v16h-16v-4h12z" fill="#fff" stroke="#1d3fb0" stroke-width="1.300"/>${C}`),
 in3: ic(`<path d="M2 10h4M8 6v5" stroke="#222"/><circle cx="14" cy="12" r="4.500" fill="#fff" stroke="#16307e" stroke-width="1.200"/><path d="M14 12V7.500A4.500 4.500 0 0 1 18.500 12zM14 12v4.500A4.500 4.500 0 0 1 9.500 12z" fill="#16307e"/><path d="M14 6v12M8 12h12" stroke="#16307e"/>${C}`),
 in4: ic(`<path d="M3 5l3-3 5 2v4l4-1 6 3v11l-4 1-13-6z" ${F}/><path d="M3 5l5 2v7l5 2V9" ${B}/>${C}`),
 mo1: ic('<path d="M4 3v17" stroke="#555"/><path d="M9 3c0 10 3 17 13 17" fill="none" stroke="#1d5fd0" stroke-width="1.500"/><g fill="#fff" stroke="#222"><rect x="2.500" y="1.500" width="3" height="3"/><rect x="2.500" y="18" width="3" height="3"/></g><g fill="#fff" stroke="#1d5fd0"><rect x="8" y="1.500" width="3" height="3"/><rect x="20" y="18" width="3" height="3"/></g>'),
 mo2: ic('<path d="M5 2h14l4 7H1zM3 5h18M8 2L5 9M12 2v7M16 2l3 7" fill="none" stroke="#555"/><path d="M12 2v7" stroke="#2c2" stroke-width="1.500"/><path d="M12 5h9" stroke="#e01818" stroke-width="1.500"/><path d="M10 11h4l-2 2z"/><path d="M5 15h14l4 8H1z" fill="#6f90f4" stroke="#1d3fb0"/><path d="M3 19h18M8 15l-2 8M12 15v8M16 15l2 8" stroke="#cfdcff" stroke-width=".8"/>'),
 pa1: ic('<rect x="2" y="6" width="9" height="11" fill="#eee" stroke="#222"/><path d="M4 9h5M4 12h5M4 14.500h5" stroke="#222"/><path d="M12 11l5-7M12 11.500h5M12 12l5 6" stroke="#222" stroke-dasharray="1 1"/><g fill="#dfe7ff" stroke="#1d3fb0"><rect x="17.500" y="2" width="5" height="4"/><rect x="17.500" y="9.500" width="5" height="4"/><rect x="17.500" y="17" width="5" height="4"/></g>'),
 pa2: ic('<circle cx="5" cy="8" r="2.800" fill="none" stroke="#333" stroke-width="1.600"/><path d="M5 11v8M5 18h3" stroke="#333" stroke-width="1.600"/><path d="M10 11l7-7M10 11.500h7M10 12l7 6" stroke="#222" stroke-dasharray="1 1"/><g fill="#dfe7ff" stroke="#1d3fb0"><rect x="17.500" y="2" width="5" height="4"/><rect x="17.500" y="9.500" width="5" height="4"/><rect x="17.500" y="17" width="5" height="4"/></g>'),
 si1: ic('<path d="M3 6l4-3h13v17H3z" fill="#c4d6bc" stroke="#333"/><path d="M7 18v-8h4V6h6v12z" fill="#dfe7ff" stroke="#2b5fe0"/><g fill="#fff" stroke="#2b5fe0" stroke-width=".8"><rect x="6" y="9" width="2" height="2"/><rect x="6" y="17" width="2" height="2"/><rect x="16" y="5" width="2" height="2"/><rect x="16" y="17" width="2" height="2"/></g>'),
 si2: ic('<g fill="#6f90f4"><circle cx="3" cy="7" r="1.500"/><circle cx="7" cy="5" r="1.500"/><circle cx="12" cy="3" r="1.500"/><circle cx="17" cy="2" r="1.500"/><circle cx="3" cy="12" r="1.500"/><circle cx="6" cy="15" r="1.500"/><circle cx="2" cy="17" r="1.500"/><circle cx="9" cy="8" r="1.500"/></g><rect x="9" y="8.500" width="12" height="12" fill="#c4d6bc" stroke="#333"/><path d="M10 14c4-1 7 3 6 6M10 10.500c7 0 10 5 9.500 10" fill="none" stroke="#6f8f66"/>')
};
const groups = [['Analyze',61,1,37,'ABWT ACC ACG ACGL'],['Build',61,1,23,'*tri *col *beam *floor'],['Category',61,0,42,'ID *cat1 C *cat2'],['Custom',61,1,36,'*py *py *py *py'],['Datu...',33,0,28,'*grid *home'],['DirectShape',71,0,57,'*dome *dsA D *dsB'],['Document',61,0,48,'A ID D'],['Element',61,1,38,'EBG D CSG *boxes'],['Family',71,1,29,'T L _ N'],['Family Elem...',71,0,63,'*faA V *faB V'],['Filter',61,1,23,'*nin *or *and'],['Host',33,0,22,'F I'],['Input',61,1,24,'*in1 *in2 *in3 *in4'],['Material',71,1,37,'ID C _ N'],['Model',33,0,28,'*mo1 *mo2'],['Para...',33,0,28,'*pa1 *pa2'],['Site',33,0,19,'*si1 *si2'],['Type',33,0,23,'D ID'],['View',33,0,23,'A ID']];
$('ribbon').innerHTML = groups.map(([n,w,plus,tw,items]) => {
  const cells = items.split(' ').map(k => k == '_' ? '<i></i>' : k[0] == '*' ? I[k.slice(1)] : key(k)).join('');
  const cols = w == 33 ? 'grid-cols-[24px]' : w == 61 ? 'grid-cols-[24px_24px] gap-x-[4px]' : 'grid-cols-[24px_24px] gap-x-[14px]';
  return `<div class="h-[73px] shrink-0 rounded-[4px] border border-[#8f8f8f] bg-linear-to-b from-[#e2e2e2] to-[#d2d2d2] flex flex-col overflow-hidden relative" ${px(w)}>
   <div class="grid ${cols} auto-rows-[24px] gap-y-[4px] pl-[3px] pt-[3px] h-[58px]">${cells}</div>
   ${w == 71 ? '<i class="absolute left-[34px] top-[5px] w-px h-[50px] bg-[#bcbcbc]"></i>' : ''}
   <div class="h-[14px] -mx-px bg-linear-to-b from-[#383838] to-[#181818] text-white flex items-center"><div class="flex-1 flex justify-center"><span data-w="${tw}">${n}</span></div>${plus ? '<svg class="w-[7px] h-[7px] mr-[3px]" viewBox="0 0 8 8"><path d="M4 0v8M1 4h6" stroke="#8a8a8a" stroke-width="1.500"/></svg>' : ''}</div></div>`;
}).join('');

// Preview mode buttons
$('preview').innerHTML = `<path d="M1411 183l5-9h8l5 4-4 9h-12z" fill="#c4c4c4" stroke="#777"/><ellipse cx="1424" cy="177" rx="4" ry="3" fill="#f4f4f4" stroke="#777" transform="rotate(35 1424 177)"/><ellipse cx="1420" cy="190" rx="8.500" ry="4.500" fill="#2a2a2a" stroke="#777"/>
<g fill="none" stroke="#333"><path d="M1438 186l10-12q7-1 10 6l-9 13q-9 1-11-7z" fill="#fafafa"/><ellipse cx="1453" cy="179" rx="6" ry="4.500" transform="rotate(50 1453 179)"/><ellipse cx="1443.500" cy="188" rx="5" ry="4" transform="rotate(50 1443 188)"/><circle cx="1453" cy="179" r="2.500"/></g>
<rect x="1464.500" y="169.500" width="27" height="28" fill="#e5f1fb" stroke="#0078d7"/><path d="M1467 186l10-12q8-2 11 6l-9 14q-10 1-12-8z" fill="#c2160f" stroke="#4d0500"/><ellipse cx="1482" cy="179" rx="6.500" ry="5" fill="#e0382c" transform="rotate(45 1482 179)"/><ellipse cx="1482.500" cy="179" rx="2.500" ry="1.800" fill="#5a0500" transform="rotate(45 1482.500 179)"/>
<path d="M1500.500 174v20M1567.500 174v20M1606.500 174v22" stroke="#bbb"/>
<path d="M1512 186l9-11q8-1 11 6l-9 13q-9 1-11-8z" fill="#ddd" stroke="#666"/><path d="M1516 178l5-4q9-1 11 7l-5 8z" fill="#55a51c" stroke="#275c07"/><ellipse cx="1527" cy="179" rx="3" ry="2" fill="#eef5e6"/><path d="M1512 176l18 16" stroke="#111" stroke-width="1.500"/>
<circle cx="1550" cy="183.500" r="9.500" fill="#c9c9c9" stroke="#333"/><path d="M1550 174a9.500 9.500 0 0 0 0 19z" fill="#e8861c"/><ellipse cx="1547" cy="179" rx="4" ry="3" fill="#fff" fill-opacity=".5"/>
<path d="M1579 176l6-2 6 2 2 6-1 6-5 4h-6l-5-4-1-6z" fill="#5db1ee" stroke="#16387a" stroke-width="1.200"/><ellipse cx="1581" cy="180" rx="4" ry="3" fill="#cfeaff"/><path d="M1598 183h5l-2.500 3z"/>`;

// Node canvas
const nt = (t, x, y, w, a = 'middle', f = '#111') => `<text x="${x}" y="${y}" font-size="12" text-anchor="${a}" fill="${f}" textLength="${w}" lengthAdjust="spacingAndGlyphs">${t}</text>`;
const box = (x, y, w, h, f = 'gNode') => `<rect x="${x + .5}" y="${y + .5}" width="${w - 1}" height="${h - 1}" rx="3" fill="url(#${f})" stroke="#333" stroke-width="1.200"/><path d="M${x + 3} ${y + 1.500}h${w - 6}" stroke="#fff" stroke-opacity=".7"/>`;
const tri = (x, y) => `<path d="M${x} ${y}h13l-6.500 12z" fill="url(#gTri)" stroke="#111"/><path d="M${x+3} ${y+1.500}h7" stroke="#999"/>`;
const gin = (x, y) => `<path d="M${x} ${y - 4}a4 4 0 0 0 0 8" fill="#fff" stroke="#000" stroke-width="1.600"/>`;
const gout = (x, y) => `<path d="M${x} ${y - 4}a4 4 0 0 1 0 8" fill="#fff" stroke="#000" stroke-width="1.600"/>`;
const wire = (a, b, c, d) => `<path d="M${a} ${b}C${(a + c) / 2} ${b} ${(a + c) / 2} ${d} ${c} ${d}" fill="none" stroke="#666" stroke-width="2.600"/>`;
let c = '<rect x="528" y="200" width="1080" height="508" fill="#fff"/><rect x="529" y="200" width="1079" height="17" fill="url(#gTop)"/><rect x="529" y="200" width="66" height="18" fill="url(#gFade)"/><rect x="529" y="217" width="66" height="491" fill="url(#gLeft)"/><rect x="529" y="200" width="66" height="508" fill="url(#hatch)"/><rect x="595" y="200" width="1013" height="17" fill="url(#hatch)"/><g stroke="#000" stroke-opacity=".13">';
for (let x = 745; x < 1600; x += 150) c += `<path d="M${x + .5} 200V707"/>`;
for (let y = 267; y < 700; y += 50) c += `<path d="M529 ${y + .5}H1607"/>`;
c += '</g><path d="M595.500 707V217.500H1607" fill="none" stroke="#000"/><path d="M528.500 200V707" stroke="#777" stroke-width="2"/>';
c += wire(904,349.500,931,349.510)+wire(1213,300.500,1292,316.500)+wire(1213,349.500,1292,336.500)+wire(1211,392.500,1292,356.500)+wire(1213,437.500,1292,376.500)+wire(1369,386.500,1407,386.510);
c += gout(900,349.500)+gin(1159,300.500)+gout(1210,300.500)+gout(1211,349.500)+gout(1209,392.500)+gout(1211,437.500)+gout(1365,386.500)+gin(1410,386.500)+gin(1410,406.500)+gout(1491,396.500);
for (let i = 0; i < 8; i++) c += gin(1295, 316.500 + 20 * i);
c += box(665,338,235,23)+nt('Model',671.500,352.500,32,'start')+'<path d="M709.500 341v17" stroke="#999"/><path d="M710.500 341v17" stroke="#fff"/>'+nt('Walls',794.500,352.500,27)+tri(882,343.500);
c += box(931,338,280,23)+nt('Curtain Wall : Grid Butt-Join',1060.500,352.500,139)+tri(1193,343.500);
c += box(1079,381,130,23)+nt('Level',1086.500,395.500,24,'start')+'<path d="M1117.500 384v17" stroke="#999"/><path d="M1118.500 384v17" stroke="#fff"/>'+nt('1ST FLOOR',1152,395.500,53)+tri(1191,386.500);
c += box(1044,427,167,21)+'<path d="M1090.500 427.500h-43a3 3 0 0 0-3 3v14a3 3 0 0 0 3 3h43z" fill="url(#gPur)" stroke="#333" stroke-width="1.200"/>'+nt('Height',1068,440.500,34)+'<path d="M1100 437.500h62M1100.500 432v6M1110.500 434v4M1120.500 434v4M1130.500 434v4M1140.500 434v4M1150.500 432v6" stroke="#bbb"/>'+nt('10.000',1192,440.500,31,'end')+'<circle cx="1200.500" cy="437.500" r="3.200" fill="#fff" stroke="#000" stroke-width="2"/>';
c += box(1159,288,51,25)+'<path d="M1178 290h12l5.500 10.500-5.500 10.500h-12l-5.500-10.500z" fill="#222" stroke="#000"/><g fill="none" stroke="#fff" stroke-width="1.300" transform="rotate(-40 1184 300)"><ellipse cx="1184" cy="300.500" rx="8" ry="5"/><ellipse cx="1184" cy="300" rx="4.500" ry="2.300"/><path d="M1181 300h6"/></g>';
c += box(1295,304,70,165,'gTall');
[...'CTLHLFJS'].forEach((t, i) => c += `<text x="${t == 'C' || t == 'H' ? 1306 : 1307}" y="${319.500 + 20 * i}" text-anchor="middle" font-size="11.500" fill="${i == 0 || i == 1 || i == 3 ? '#111' : '#3a1038'}">${t}</text>`);
c += '<use href="#wallic" x="1315" y="373" width="24" height="24"/>'+nt('W',1349,389.500,10)+box(1410,374,81,45)+nt('E',1436,389.500,5.500)+nt('LOD',1427.500,409.500,20)+'<use href="#boxes" x="1443" y="384" width="24" height="24"/>'+nt('G',1475.500,399.500,7.500);
c += '<circle cx="1577.500" cy="677.500" r="20" fill="#fff" stroke="#222" stroke-width="1.300"/><circle cx="1577.500" cy="677.500" r="18" fill="url(#gBall)"/><path d="M1558 666l7 6-8-1zM1582 661l6 1-4 5zM1591 684l4-2v6zM1566 692l5-2 1 6z" fill="#fff"/><path d="M1549 665l7-3 1 3c3-1 4-6 11-8l5 1c-6 2-12 6-15 13l-2-3-3 3z" fill="#000"/>';
$('canvas').innerHTML = c;

$('mini').innerHTML = `<path d="M549 682h5v5M532 699v5h5" ${K}/><g fill="#eef3ff" stroke="#1d3fb0" stroke-width="1.300"><rect x="535.500" y="685.500" width="6.500" height="6.500"/><rect x="543" y="685.500" width="6.500" height="6.500"/><rect x="535.500" y="693" width="6.500" height="6.500"/><rect x="543" y="693" width="6.500" height="6.500"/></g>
<rect x="559.500" y="681.500" width="23" height="23" rx="3" fill="#ffc62a" stroke="#222"/><path d="M562 698l3-2v3l4-6v5l4-8v7l5-10-2 10 3-6" fill="none" stroke="#8a4a00" stroke-width="2"/>
<rect x="587.500" y="681.500" width="23" height="23" rx="3" fill="#d4d4d4" stroke="#222"/><text x="599" y="698.500" font-size="15" text-anchor="middle">E</text>
<rect x="615.500" y="681.500" width="23" height="23" fill="#c9c9c9" stroke="#222"/><rect x="616" y="682" width="10" height="3" fill="#11e"/><path d="M622 704c0-10 4-15 16-16v16z" fill="#222"/><circle cx="631" cy="697" r="7.500" fill="url(#gGreen)"/>
<path d="M644 685l3-3 7 4v12l-2 2-8-4z" fill="#e9e9e9" stroke="#333"/><path d="M655 689l3-2 8 4v12l-3 2-8-4z" fill="#e9e9e9" stroke="#333"/><path d="M657 682h9l-3 5v5h-3v-5z" fill="#6f90f4" stroke="#1d3fb0"/><path d="M671.500 680v26" stroke="#777"/><rect x="670" y="680" width="5" height="26" fill="#777"/>`;

document.querySelectorAll('[data-w]').forEach(e => {
  const w = e.dataset.w;
  e.classList.add('block', 'shrink-0');
  e.innerHTML = `<svg class="block h-[16px] overflow-visible" width="${w}" height="16" fill="currentColor">${label(e.innerHTML, 0, 12, w)}</svg>`;
});
</script>
</body>
</html>
